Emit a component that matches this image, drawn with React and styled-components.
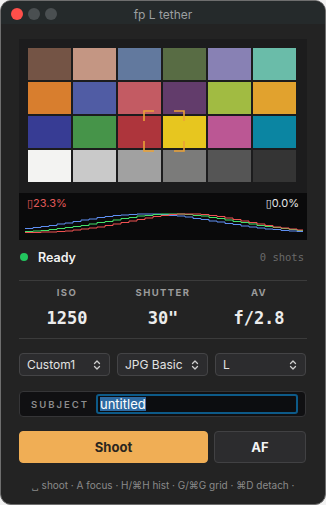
import React from 'react';
import styled, { createGlobalStyle } from 'styled-components';

const GlobalStyle = createGlobalStyle`
	html, body {
		margin: 0;
		padding: 0;
		background: #f2f2f2;
	}
	* {
		box-sizing: border-box;
	}
`;

const patches = [
	'#745445', '#c49683', '#62799e', '#586c44', '#8881b4', '#6abca9',
	'#d87e2e', '#505ca4', '#c35b63', '#623c6b', '#a1bb42', '#e1a22e',
	'#373c94', '#469449', '#ae353c', '#e7c61f', '#bb5794', '#0b85a2',
	'#f3f3f2', '#c9c9c9', '#a1a1a1', '#7b7b7a', '#555555', '#343434'
];

const channels = [
	{ color: '#5f8ff2', mu: 124, sigma: 70 },
	{ color: '#45e06a', mu: 150, sigma: 65 },
	{ color: '#f05252', mu: 166, sigma: 58 }
];

function stepPath({ mu, sigma }) {
	let d = '';
	for (let x = 6; x <= 284; x += 8) {
		const g = Math.exp(-Math.pow((x - mu) / sigma, 2) / 2);
		const y = Math.round((40 - 19 * g) * 2) / 2;
		d += x === 6 ? `M${x} ${y}` : ` V${y}`;
		d += ` H${Math.min(x + 8, 284)}`;
	}
	return d;
}

function Chevron() {
	return (
		<svg width="8" height="12" viewBox="0 0 8 12" fill="none" stroke="#cfcfcf" strokeWidth="1.3" strokeLinecap="round" strokeLinejoin="round">
			<path d="M1.5 4.5 L4 2 L6.5 4.5" />
			<path d="M1.5 7.5 L4 10 L6.5 7.5" />
		</svg>
	);
}

function App() {
	return (
		<>
			<GlobalStyle />
			<Window>
				<TitleBar>
					<Lights>
						<Light $color="#fe4f4a" />
						<Light $color="#4a4f51" />
						<Light $color="#4a4f51" />
					</Lights>
					<Title>fp L tether</Title>
				</TitleBar>

				<Content>
					<Preview>
						<Chart>
							{patches.map((c, i) => (
								<Patch key={i} $color={c} />
							))}
						</Chart>
						<Focus width="42" height="42" viewBox="0 0 42 42" fill="none" stroke="#eba236" strokeWidth="1.6">
							<path d="M1 11 V1 H11" />
							<path d="M31 1 H41 V11" />
							<path d="M1 31 V41 H11" />
							<path d="M31 41 H41 V31" />
						</Focus>
					</Preview>

					<Histogram>
						<HistLabel $color="#e25a5a">▯23.3%</HistLabel>
						<HistLabel $color="#e6e6e6" $right>▯0.0%</HistLabel>
						<svg width="288" height="47" viewBox="0 0 288 47" fill="none">
							{channels.map((ch) => (
								<path key={ch.color} d={stepPath(ch)} stroke={ch.color} strokeWidth="1" />
							))}
						</svg>
					</Histogram>

					<Status>
						<Dot />
						<StatusText>Ready</StatusText>
						<Shots>0 shots</Shots>
					</Status>

					<Stats>
						<Stat>
							<StatLabel>ISO</StatLabel>
							<StatValue>1250</StatValue>
						</Stat>
						<Stat>
							<StatLabel>SHUTTER</StatLabel>
							<StatValue>30"</StatValue>
						</Stat>
						<Stat>
							<StatLabel>AV</StatLabel>
							<StatValue>f/2.8</StatValue>
						</Stat>
					</Stats>

					<Selects>
						<Select><span>Custom1</span><Chevron /></Select>
						<Select><span>JPG Basic</span><Chevron /></Select>
						<Select><span>L</span><Chevron /></Select>
					</Selects>

					<Subject>
						<SubjectLabel>SUBJECT</SubjectLabel>
						<SubjectInput>
							<Selected>untitled</Selected>
						</SubjectInput>
					</Subject>

					<Buttons>
						<Button $primary>Shoot</Button>
						<Button>AF</Button>
					</Buttons>

					<Footer>␣ shoot · A focus · H/⌘H hist · G/⌘G grid · ⌘D detach ·</Footer>
				</Content>
			</Window>
		</>
	);
}

const Window = styled.div`
	width: 326px;
	height: 505px;
	border: 1px solid #6e6e6e;
	border-radius: 11px;
	overflow: hidden;
	background: #232323;
	font-family: Inter, "Noto Sans", sans-serif;
	color: #e8e8e8;
`;

const TitleBar = styled.div`
	position: relative;
	height: 23px;
	background: #252a2b;
	display: flex;
	align-items: center;
	justify-content: center;
`;

const Lights = styled.div`
	position: absolute;
	left: 10px;
	top: 7px;
	display: flex;
	gap: 5px;
`;

const Light = styled.span`
	width: 12px;
	height: 12px;
	border-radius: 50%;
	background: ${(p) => p.$color};
`;

const Title = styled.div`
	font-size: 12px;
	color: #9c9fa0;
	margin-top: 3px;
`;

const Content = styled.div`
	padding: 15px 18px 0;
`;

const Preview = styled.div`
	position: relative;
	height: 154px;
	background: #1c1c1d;
	padding: 9px 11px 11px 9px;
`;

const Chart = styled.div`
	display: grid;
	grid-template-columns: repeat(6, 43px);
	grid-auto-rows: 32px;
	gap: 2px;
`;

const Patch = styled.div`
	background: ${(p) => p.$color};
`;

const Focus = styled.svg`
	position: absolute;
	left: 124px;
	top: 71px;
`;

const Histogram = styled.div`
	position: relative;
	height: 47px;
	background: #0a0a0b;

	svg {
		display: block;
	}
`;

const HistLabel = styled.span`
	position: absolute;
	top: 3px;
	${(p) => (p.$right ? 'right: 8px;' : 'left: 8px;')}
	font-size: 11px;
	color: ${(p) => p.$color};
	font-family: Inter, "DejaVu Sans", sans-serif;
`;

const Status = styled.div`
	height: 34px;
	display: flex;
	align-items: center;
	padding: 0 3px 0 1px;
`;

const Dot = styled.span`
	width: 8px;
	height: 8px;
	border-radius: 50%;
	background: #22c55e;
	margin-right: 10px;
`;

const StatusText = styled.span`
	font-size: 12.5px;
	font-weight: 600;
	color: #f2f2f2;
`;

const Shots = styled.span`
	margin-left: auto;
	font-family: "DejaVu Sans Mono", monospace;
	font-size: 10.5px;
	color: #6a6a6a;
`;

const Stats = styled.div`
	margin-top: 6px;
	border-top: 1px solid #3b3b3b;
	border-bottom: 1px solid #3b3b3b;
	display: grid;
	grid-template-columns: repeat(3, 1fr);
	padding: 6px 0 9px;
`;

const Stat = styled.div`
	display: flex;
	flex-direction: column;
	align-items: center;
	gap: 8px;
`;

const StatLabel = styled.div`
	font-size: 9.5px;
	line-height: 12px;
	font-weight: 700;
	letter-spacing: 1.4px;
	color: #9b9b9b;
`;

const StatValue = styled.div`
	font-family: "DejaVu Sans Mono", monospace;
	font-size: 17px;
	line-height: 22px;
	font-weight: 700;
	color: #ececec;
`;

const Selects = styled.div`
	margin-top: 14px;
	display: grid;
	grid-template-columns: repeat(3, 91px);
	gap: 7px;
`;

const Select = styled.div`
	height: 23px;
	display: flex;
	align-items: center;
	justify-content: space-between;
	padding: 0 8px 0 7px;
	background: #2c2c2e;
	border: 1px solid #444446;
	border-radius: 4px;
	font-size: 12px;
	color: #e2e2e2;
`;

const Subject = styled.div`
	margin-top: 15px;
	width: 287px;
	height: 26px;
	display: flex;
	align-items: center;
	padding: 0 7px 0 11px;
	background: #101012;
	border: 1px solid #353537;
	border-radius: 4px;
`;

const SubjectLabel = styled.span`
	width: 65px;
	font-size: 9.5px;
	font-weight: 600;
	letter-spacing: 2px;
	color: #8c8c8c;
`;

const SubjectInput = styled.div`
	flex: 1;
	height: 20px;
	display: flex;
	align-items: center;
	padding: 0 2px;
	border: 2px solid #0d5a88;
	border-radius: 3px;
	background: #0c0d10;
`;

const Selected = styled.span`
	font-size: 13px;
	line-height: 14px;
	color: #ffffff;
	background: #2d6aa2;
`;

const Buttons = styled.div`
	margin-top: 14px;
	width: 287px;
	display: grid;
	grid-template-columns: 1fr 92px;
	gap: 6px;
`;

const Button = styled.div`
	height: 32px;
	display: flex;
	align-items: center;
	justify-content: center;
	border-radius: 4px;
	font-size: 13px;
	font-weight: 700;
	background: ${(p) => (p.$primary ? '#f0ae55' : '#2c2c2e')};
	color: ${(p) => (p.$primary ? '#2a2620' : '#f4f4f4')};
	border: 1px solid ${(p) => (p.$primary ? '#f0ae55' : '#414143')};
`;

const Footer = styled.div`
	margin-top: 15px;
	text-align: center;
	font-size: 10px;
	line-height: 14px;
	color: #8a8a8a;
	white-space: nowrap;
`;

export default App;
